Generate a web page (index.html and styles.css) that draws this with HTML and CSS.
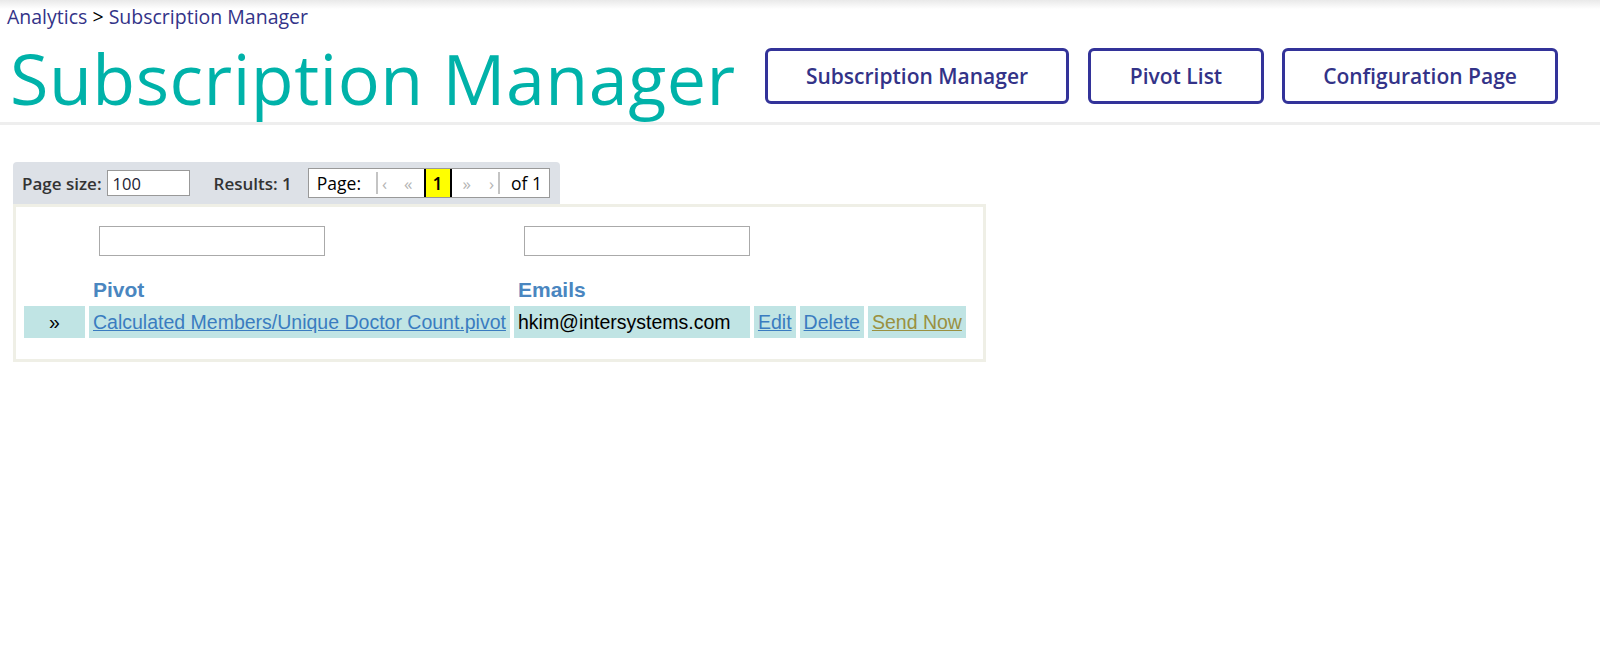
FILE: index.html
```html
<!DOCTYPE html>
<html lang="en">
<head>
  <meta charset="UTF-8">
  <title>Subscription Manager</title>
  <link rel="stylesheet" href="styles.css">
</head>
<body>
  <div class="header">
    <div class="title-block">
      <div class="crumbs"><a href="#">Analytics</a> <span class="sep">&gt;</span> <a href="#">Subscription Manager</a></div>
      <h1>Subscription Manager</h1>
    </div>
    <div class="nav">
      <button class="nav-btn btn-subs">Subscription Manager</button>
      <button class="nav-btn btn-pivot">Pivot List</button>
      <button class="nav-btn btn-config">Configuration Page</button>
    </div>
  </div>

  <div class="content">
    <div class="pager">
      <label>Page size:</label>
      <input class="page-size" type="text" value="100">
      <span class="results">Results: 1</span>
      <div class="pages">
        <span class="page-label">Page:</span>
        <span class="nav-link first"><i class="bar"></i>&lsaquo;</span>
        <span class="nav-link prev">&laquo;</span>
        <span class="current">1</span>
        <span class="nav-link next">&raquo;</span>
        <span class="nav-link last">&rsaquo;<i class="bar"></i></span>
        <span class="page-total">of 1</span>
      </div>
    </div>

    <div class="grid-box">
      <table class="grid">
        <tr class="filters">
          <td></td>
          <td><input type="text"></td>
          <td><input type="text"></td>
          <td></td><td></td><td></td>
        </tr>
        <tr class="heads">
          <th></th>
          <th>Pivot</th>
          <th>Emails</th>
          <th></th><th></th><th></th>
        </tr>
        <tr class="row">
          <td class="sel">&raquo;</td>
          <td><a href="#">Calculated Members/Unique Doctor Count.pivot</a></td>
          <td>hkim@intersystems.com</td>
          <td><a href="#">Edit</a></td>
          <td><a href="#">Delete</a></td>
          <td><a href="#" class="send">Send Now</a></td>
        </tr>
      </table>
    </div>
  </div>
</body>
</html>
```

FILE: styles.css
```css
* {
  box-sizing: border-box;
}

body {
  margin: 0;
  font-family: 'Open Sans', 'Liberation Sans', sans-serif;
  background: #fff;
}

.header {
  display: flex;
  justify-content: space-between;
  align-items: flex-start;
  height: 125px;
  padding: 0 42px 0 7px;
  border-bottom: 3px solid #eeeeee;
  background: linear-gradient(#e9e9e9 0px, #fff 9px);
}

.crumbs {
  font-size: 19.5px;
  line-height: 26px;
  padding-top: 4px;
  color: #000;
}

.crumbs a {
  color: #333388;
  text-decoration: none;
}

h1 {
  margin: 0 0 0 3px;
  font-weight: 400;
  font-size: 70px;
  line-height: normal;
  letter-spacing: 0.5px;
  color: #00b2a9;
}

.nav {
  display: flex;
  gap: 18px;
  margin-top: 48px;
}

.nav-btn {
  height: 56px;
  border: 3px solid #333399;
  border-radius: 6px;
  background: #fff;
  color: #333388;
  font-family: 'Open Sans', sans-serif;
  font-weight: 600;
  font-size: 21px;
  padding: 0;
}

.btn-subs { width: 304px; margin-right: 1px; }
.btn-pivot { width: 176px; }
.btn-config { width: 276px; }

.content {
  padding: 37px 0 0 13px;
}

.pager {
  display: inline-flex;
  align-items: center;
  height: 42px;
  padding: 0 10px 0 9px;
  background: #dde1e7;
  border-radius: 4px 4px 0 0;
  font-size: 17px;
  font-weight: 600;
  color: #333;
}

.page-size {
  width: 83px;
  height: 26px;
  margin: 0 24px 0 5px;
  border: 1px solid #999;
  padding: 0 5px;
  font-family: 'Open Sans', sans-serif;
  font-size: 16.5px;
  color: #223;
}

.results {
  margin-right: 16px;
}

.pages {
  display: flex;
  align-items: center;
  height: 30px;
  padding: 0 7px 0 8px;
  background: #fff;
  border: 1px solid #999;
  color: #000;
  font-weight: 400;
  font-size: 17.5px;
}

.pages .nav-link {
  display: flex;
  align-items: center;
  color: #b4b4b4;
  font-size: 17px;
  height: 28px;
}

.pages .bar {
  display: inline-block;
  width: 2px;
  height: 22px;
  background: #c4c4c4;
}

.pages .first { margin-left: 15px; }
.pages .first .bar { margin-right: 4px; }
.pages .prev { margin-left: 17px; }
.pages .next { margin-left: 11px; }
.pages .last { margin-left: 18px; }
.pages .last .bar { margin-left: 4px; }

.pages .current {
  margin-left: 11px;
  width: 28px;
  height: 28px;
  line-height: 28px;
  text-align: center;
  background: #ffff00;
  border-left: 2px solid #000;
  border-right: 2px solid #000;
  font-weight: 600;
}

.pages .page-total {
  margin-left: 11px;
}

.grid-box {
  width: 973px;
  border: 3px solid #efefe6;
  padding: 4px 4px 17px 4px;
}

.grid {
  border-collapse: separate;
  border-spacing: 4px;
  font-family: 'Liberation Sans', Arial, sans-serif;
  font-size: 19.5px;
}

.filters td {
  height: 43px;
  padding: 11px 0 0 0;
  vertical-align: top;
}

.filters input {
  display: block;
  width: 226px;
  height: 30px;
  margin-left: 10px;
  border: 1px solid #aaa;
}

.heads th {
  height: 40px;
  text-align: left;
  vertical-align: bottom;
  color: #4a86c0;
  font-size: 21px;
  font-weight: bold;
  padding: 0 4px;
  line-height: 24px;
}

.row td {
  background: #c0e4e4;
  height: 32px;
  padding: 0 4px;
  color: #000;
  white-space: nowrap;
}

.row td.sel {
  width: 61px;
  text-align: center;
}

.row a {
  color: #3a7cc0;
}

.row a.send {
  color: #9a9040;
}
```
